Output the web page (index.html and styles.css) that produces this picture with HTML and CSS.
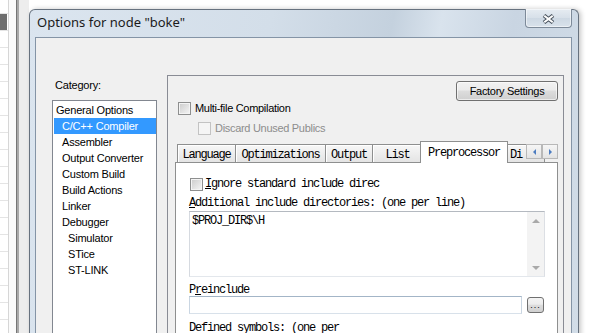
FILE: index.html
```html
<!DOCTYPE html>
<html>
<head>
<meta charset="utf-8">
<link rel="stylesheet" href="styles.css">
</head>
<body>
<div class="desktop">
  <div class="bgapp">
    <div class="bglist"><div class="bgsel"></div></div>
    <div class="bgline"></div>
    <div class="bgpane"></div>
    <div class="bgdark"></div>
    <div class="bgmid"></div>
    <div class="bggray"></div>
  </div>
  <div class="window">
    <div class="titlebar">
      <div class="title">Options for node "boke"</div>
      <div class="closebtn">
        <svg width="13" height="10" viewBox="0 0 13 10"><path d="M2 1.5 L11 8.5 M11 1.5 L2 8.5" stroke="#4b5560" stroke-width="4" fill="none"/><path d="M2.3 1.8 L10.7 8.2 M10.7 1.8 L2.3 8.2" stroke="#ffffff" stroke-width="2" fill="none"/></svg>
      </div>
    </div>
    <div class="client">
      <div class="leftcol">
        <div class="catlabel">Category:</div>
        <div class="listbox">
          <div class="item l0">General Options</div>
          <div class="item l1 sel">C/C++ Compiler</div>
          <div class="item l1">Assembler</div>
          <div class="item l1">Output Converter</div>
          <div class="item l1">Custom Build</div>
          <div class="item l1">Build Actions</div>
          <div class="item l1">Linker</div>
          <div class="item l1">Debugger</div>
          <div class="item l2">Simulator</div>
          <div class="item l2">STice</div>
          <div class="item l2">ST-LINK</div>
        </div>
      </div>
      <div class="panel">
        <div class="btnrow"><div class="btn factory">Factory Settings</div></div>
        <div class="chkrow r1"><span class="chk"></span><span>Multi-file Compilation</span></div>
        <div class="chkrow r2"><span class="chk dis"></span><span>Discard Unused Publics</span></div>
        <div class="tabstrip">
          <div class="tab w1">Language</div>
          <div class="tab w2">Optimizations</div>
          <div class="tab w3">Output</div>
          <div class="tab w4">List</div>
          <div class="tab active w5">Preprocessor</div>
          <div class="tab w6">Di</div>
          <div class="tabscroll">
            <span class="sbtn"><i class="arrow aleft"></i></span>
            <span class="sbtn"><i class="arrow aright"></i></span>
          </div>
        </div>
        <div class="page">
          <div class="ignrow"><span class="chk"></span><span><u>I</u>gnore standard include direc</span></div>
          <div class="lbl lbl-add"><u>A</u>dditional include directories: (one per line)</div>
          <div class="textarea">
            <div class="ta-text">$PROJ_DIR$\H</div>
            <div class="ta-scroll">
              <div class="sarrow"><i class="tri-up"></i></div>
              <div class="sarrow"><i class="tri-down"></i></div>
            </div>
          </div>
          <div class="lbl lbl-pre">P<u>r</u>einclude</div>
          <div class="inrow">
            <div class="input"></div>
            <div class="dots">...</div>
          </div>
          <div class="lbl lbl-def">Defined symbols: (one per</div>
        </div>
      </div>
    </div>
  </div>
</div>
</body>
</html>
```
FILE: styles.css
```css
body {
  margin: 0;
  width: 590px;
  height: 333px;
  overflow: hidden;
  background: #fff;
  font-family: "Liberation Sans", Arial, sans-serif;
  font-size: 11px;
  color: #000;
}
.desktop {
  display: flex;
  height: 333px;
  overflow: hidden;
}
.bgapp {
  display: flex;
  flex: none;
  width: 29px;
  height: 333px;
}
.bglist {
  width: 8px;
  background: #fff linear-gradient(#e4e4e4 0 1px, transparent 1px) 0 47px / 8px 17px repeat-y;
}
.bgsel {
  margin-top: 14px;
  width: 7px;
  height: 16px;
  background: #6e6e6e;
}
.bgline { width: 1px; background: #d6d6d6; }
.bgpane { width: 7px; background: #fbfbfb; }
.bgdark { width: 1px; background: #767676; }
.bgmid { width: 2px; background: #a9a9a9; }
.bggray { width: 10px; background: #ededed; }

.window {
  flex: none;
  width: 550px;
  height: 340px;
  margin-top: 9px;
  box-sizing: border-box;
  border: 1px solid #67727f;
  border-bottom: 0;
  border-radius: 6px 6px 0 0;
  background: linear-gradient(100deg, #dbe5ef 0%, #d3dee9 40%, #c4d1de 60%, #d9e3ed 68%, #c9d5e2 80%, #d2dde8 100%);
  display: flex;
  flex-direction: column;
  box-shadow: 2px 0 5px rgba(0, 0, 0, 0.22);
}
.titlebar {
  height: 27px;
  flex: none;
  display: flex;
}
.title {
  flex: 1;
  padding-left: 7px;
  font-family: "Noto Sans", sans-serif;
  font-size: 13px;
  line-height: 25px;
  color: #1b1b1b;
  white-space: nowrap;
}
.closebtn {
  width: 47px;
  height: 19px;
  box-sizing: border-box;
  margin: -1px 6px 0 0;
  border: 1px solid #7d8a99;
  border-top: 0;
  border-radius: 0 0 4px 4px;
  background: linear-gradient(#e6ecf2, #d7e0e9 50%, #cdd8e3 51%, #d9e2eb);
  box-shadow: inset 0 0 0 1px rgba(255, 255, 255, 0.5);
  display: flex;
  align-items: center;
  justify-content: center;
  padding-top: 1px;
}
.client {
  flex: 1;
  margin: 0 6px 0 5px;
  border: 1px solid #8494a6;
  border-bottom: 0;
  background: #f0f0f0;
  display: flex;
  align-items: flex-start;
  padding: 0 7px 0 16px;
  overflow: hidden;
}
.leftcol {
  width: 105px;
  flex: none;
  padding-top: 41px;
}
.catlabel {
  padding-left: 3px;
  line-height: 13px;
  letter-spacing: -0.2px;
}
.listbox {
  margin-top: 8px;
  height: 260px;
  box-sizing: border-box;
  border: 1px solid #828790;
  background: #fff;
  padding-top: 1px;
}
.item {
  line-height: 16px;
  margin-left: 1px;
  white-space: nowrap;
  letter-spacing: -0.2px;
}
.l0 { padding-left: 2px; }
.l1 { padding-left: 8px; }
.l2 { padding-left: 14px; }
.sel { background: #3399ff; color: #fff; }

.panel {
  width: 397px;
  height: 270px;
  flex: none;
  margin: 37px 0 0 10px;
  box-sizing: border-box;
  border: 1px solid #898c95;
  border-bottom: 0;
  padding: 5px 5px 0 7px;
  display: flex;
  flex-direction: column;
}
.btnrow {
  display: flex;
  justify-content: flex-end;
}
.btn {
  box-sizing: border-box;
  border: 1px solid #707070;
  border-radius: 3px;
  background: linear-gradient(#f2f2f2 0%, #ebebeb 45%, #dddddd 50%, #cfcfcf 100%);
  box-shadow: inset 0 0 0 1px rgba(255, 255, 255, 0.6);
  display: flex;
  align-items: center;
  justify-content: center;
}
.factory {
  width: 102px;
  height: 20px;
  letter-spacing: -0.3px;
}
.chkrow {
  display: flex;
  align-items: center;
  height: 13px;
  line-height: 13px;
  gap: 4px;
  letter-spacing: -0.3px;
  white-space: nowrap;
}
.r1 { margin: 1px 0 0 3px; }
.r2 { margin: 7px 0 0 23px; color: #8d8d8d; }
.chk {
  flex: none;
  width: 13px;
  height: 13px;
  box-sizing: border-box;
  border: 1px solid #8e8f8f;
  background: linear-gradient(135deg, #cbcbcb, #f6f6f6);
  box-shadow: inset 0 0 0 1px #f4f4f4;
}
.chk.dis {
  border-color: #c3c3c3;
  background: #f5f5f5;
  box-shadow: none;
}
.tabstrip {
  flex: none;
  margin-top: 6px;
  height: 21px;
  display: flex;
  align-items: flex-end;
  position: relative;
  font-family: "Liberation Mono", monospace;
  font-size: 12px;
  letter-spacing: -1.2px;
}
.tab {
  flex: none;
  box-sizing: border-box;
  height: 18px;
  border: 1px solid #8e8f8f;
  border-bottom: 0;
  background: linear-gradient(#f7f7f7, #e4e4e4);
  box-shadow: inset 1px 1px #fff;
  padding-top: 4px;
  line-height: 13px;
  text-align: center;
  margin-left: -1px;
  white-space: nowrap;
  overflow: hidden;
}
.tab:first-child { margin-left: 2px; }
.w1 { width: 59px; }
.w2 { width: 91px; }
.w3 { width: 48px; }
.w4 { width: 51px; }
.w5 { width: 88px; }
.w6 { width: 40px; text-align: left; padding-left: 4px; }
.tab.active {
  height: 22px;
  margin: 0 -2px -1px -3px;
  background: #fff;
  box-shadow: none;
  padding-top: 5px;
  position: relative;
  z-index: 1;
}
.tabscroll {
  position: absolute;
  right: 0;
  top: 3px;
  display: flex;
  background: #f0f0f0;
  z-index: 2;
}
.sbtn {
  width: 16px;
  height: 15px;
  box-sizing: border-box;
  border: 1px solid #b8b8b8;
  background: linear-gradient(#f6f6f6, #e3e3e3);
  display: flex;
  align-items: center;
  justify-content: center;
}
.arrow {
  width: 0;
  height: 0;
  border-top: 3px solid transparent;
  border-bottom: 3px solid transparent;
}
.aleft { border-right: 3px solid #4d7cc0; }
.aright { border-left: 3px solid #4d7cc0; }

.page {
  flex: 1;
  background: #fff;
  border: 1px solid #8e8f8f;
  border-bottom: 0;
  padding: 0 12px 0 13px;
  display: flex;
  flex-direction: column;
  font-family: "Liberation Mono", monospace;
  font-size: 12px;
  letter-spacing: -1.2px;
  white-space: nowrap;
}
.ignrow {
  margin: 15px 0 0 1px;
  display: flex;
  align-items: center;
  height: 13px;
  line-height: 13px;
  gap: 2px;
}
.lbl { line-height: 13px; }
.lbl-add { margin-top: 6px; }
.textarea {
  margin-top: 1px;
  height: 66px;
  box-sizing: border-box;
  border: 1px solid;
  border-color: #b4b9c0 #dcdfe4 #e3e7ec #d6dae0;
  display: flex;
}
.ta-text {
  flex: 1;
  padding: 3px 0 0 2px;
  line-height: 13px;
}
.ta-scroll {
  width: 17px;
  background: #f3f3f3;
  display: flex;
  flex-direction: column;
  justify-content: space-between;
}
.sarrow {
  height: 17px;
  display: flex;
  align-items: center;
  justify-content: center;
}
.tri-up, .tri-down {
  width: 0;
  height: 0;
  border-left: 4px solid transparent;
  border-right: 4px solid transparent;
}
.tri-up { border-bottom: 4px solid #a9a9a9; }
.tri-down { border-top: 4px solid #a9a9a9; }
.lbl-pre { margin-top: 7px; line-height: 12px; }
.inrow {
  display: flex;
  align-items: flex-start;
  gap: 5px;
}
.input {
  width: 333px;
  height: 18px;
  box-sizing: border-box;
  border: 1px solid;
  border-color: #a3b5c7 #cad6e2 #d8e1ea #cad6e2;
}
.dots {
  width: 17px;
  height: 16px;
  margin-top: 1px;
  box-sizing: border-box;
  border: 1px solid #707070;
  border-radius: 3px;
  background: linear-gradient(#f4f4f4 0%, #ececec 45%, #dcdcdc 50%, #d0d0d0 100%);
  font-family: "Liberation Sans", sans-serif;
  font-size: 9px;
  letter-spacing: 1px;
  line-height: 9px;
  display: flex;
  align-items: flex-end;
  justify-content: center;
  padding-bottom: 2px;
}
.lbl-def { margin-top: 8px; }
```
